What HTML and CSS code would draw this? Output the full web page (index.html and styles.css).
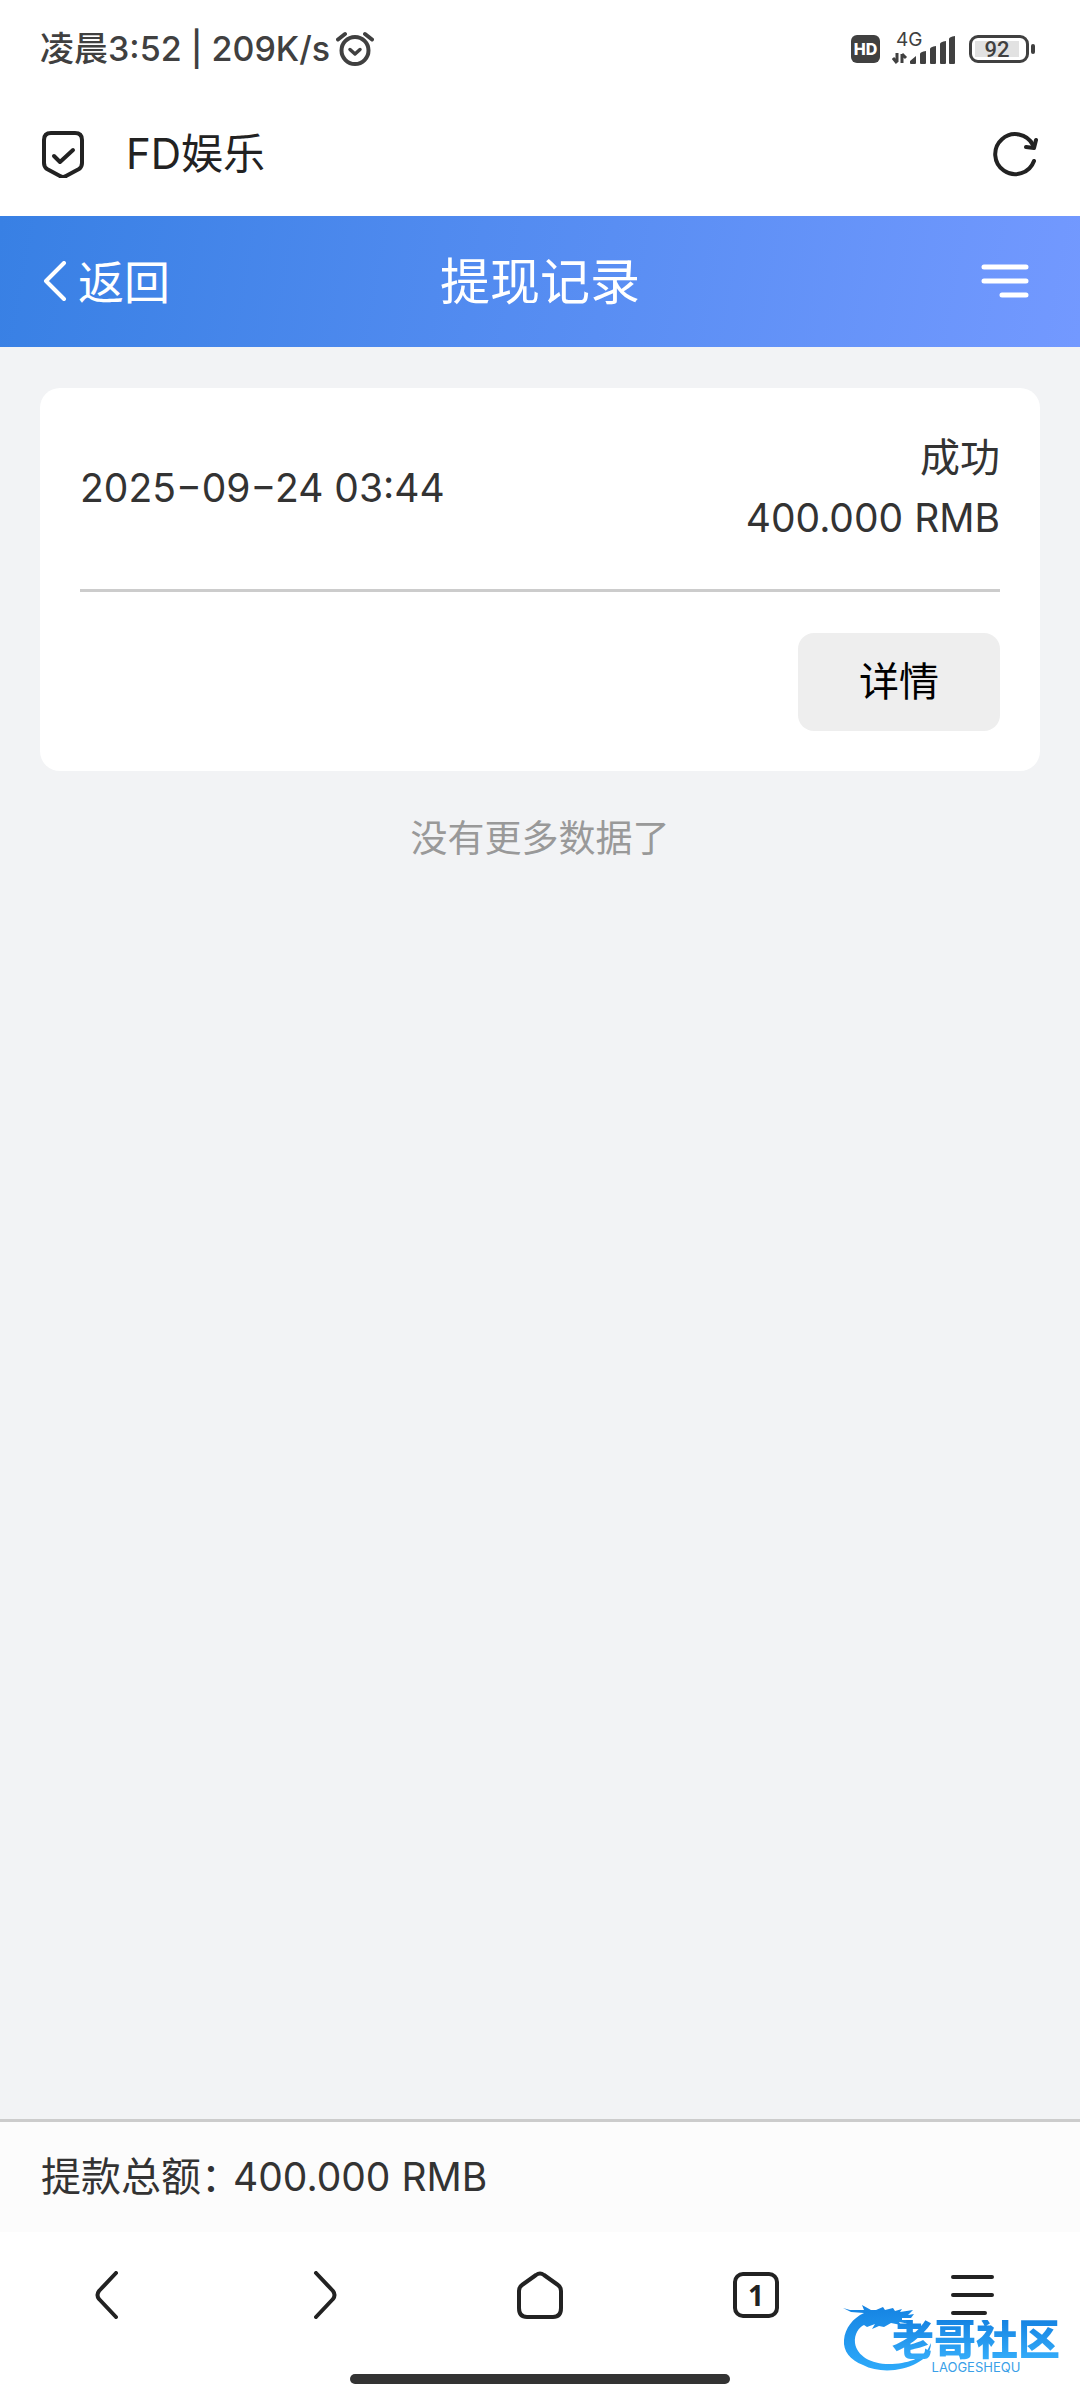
FILE: index.html
```html
<!DOCTYPE html>
<html lang="zh-CN">
<head>
<meta charset="utf-8">
<meta name="viewport" content="width=device-width, initial-scale=1">
<title>提现记录</title>
<link rel="stylesheet" href="styles.css">
</head>
<body>
<div class="status-bar">
  <div class="status-left">
    <span>凌晨3:52 | 209K/s</span>
    <svg class="icon" width="38" height="36" viewBox="0 0 38 36" fill="none" stroke="#404040" stroke-linecap="round" stroke-linejoin="round">
      <circle cx="19" cy="19.500" r="13.500" stroke-width="4"/>
      <path d="M14 18.500l5 4.500 5-4.500" stroke-width="3.500"/>
      <path d="M2 8.500l7-5.500M36 8.500l-7-5.500" stroke-width="4"/>
    </svg>
  </div>
  <div class="status-right">
    <span class="hd">HD</span>
    <div class="signal">
      <span class="network">4G</span>
      <svg class="icon" width="64" height="32" viewBox="0 0 64 32" fill="#404040">
        <path d="M5 20v9M1 25l4 5" fill="none" stroke="#404040" stroke-width="3"/>
        <path d="M10 30v-9M10 21l4 4" fill="none" stroke="#404040" stroke-width="3"/>
        <path d="M18 28l6-5v7q0 1-1 1h-4q-1 0-1-1zM28 21q0-2 6-3v12q0 1-1 1h-4q-1 0-1-1zM38 16q0-2 6-3v17q0 1-1 1h-4q-1 0-1-1zM48 11q0-2 6-3v22q0 1-1 1h-4q-1 0-1-1zM57 6q0-2 6-3v27q0 1-1 1h-4q-1 0-1-1z"/>
      </svg>
    </div>
    <div class="battery"><span class="battery-level">92</span></div>
  </div>
</div>

<div class="address-bar">
  <svg class="icon" width="44" height="48" viewBox="0 0 44 48" fill="none" stroke="#222" stroke-width="4" stroke-linecap="round" stroke-linejoin="round">
    <path d="M10 3h24q7 0 7 7v23q0 4-3 6l-13 7q-3 2-6 0L6 39q-3-2-3-6V10q0-7 7-7z"/>
    <path d="M13 26l6 6 13-12"/>
  </svg>
  <span class="site-name">FD娱乐</span>
  <button class="plain" aria-label="刷新">
    <svg class="icon" width="46" height="46" viewBox="0 0 46 46" fill="none" stroke="#222" stroke-width="4" stroke-linecap="round" stroke-linejoin="round">
      <path d="M42 30A20 20 0 1 1 41 14"/>
      <path d="M34 16l8 1 2-8"/>
    </svg>
  </button>
</div>

<header class="app-header">
  <a class="back" href="#">
    <svg class="icon" width="26" height="42" viewBox="0 0 26 42" fill="none" stroke="#fff" stroke-width="4" stroke-linecap="round" stroke-linejoin="round"><path d="M22 2L4 20l18 18"/></svg>
    返回
  </a>
  <h1 class="title">提现记录</h1>
  <button class="plain menu" aria-label="菜单">
    <svg class="icon" width="48" height="36" viewBox="0 0 48 36" fill="none" stroke="#fff" stroke-width="5" stroke-linecap="round"><path d="M3 3h42M3 17h42M21 31h24"/></svg>
  </button>
</header>

<main class="content">
  <article class="card">
    <div class="record">
      <time class="number" datetime="2025-09-24T03:44">2025−09−24 03:44</time>
      <div class="result">
        <div>成功</div>
        <div class="number">400.000 RMB</div>
      </div>
    </div>
    <div class="actions"><button class="detail">详情</button></div>
  </article>
  <p class="no-more">没有更多数据了</p>
</main>

<footer class="total"><span class="total-label">提款总额：</span><span class="number">400.000 RMB</span></footer>

<div class="browser-bar">
  <nav class="browser-nav">
    <button class="plain" aria-label="后退"><svg class="icon" width="48" height="48" viewBox="0 0 48 48"><path d="M32 2L15 20q-3 4 0 8l17 18"/></svg></button>
    <button class="plain" aria-label="前进"><svg class="icon" width="48" height="48" viewBox="0 0 48 48"><path d="M16 2l17 18q3 4 0 8L16 46"/></svg></button>
    <button class="plain" aria-label="主页"><svg class="icon" width="48" height="48" viewBox="0 0 48 48"><path d="M20 4q4-3 8 0l14 10q3 2 3 6v17q0 9-8 9H11q-8 0-8-9V20q0-4 3-6z"/></svg></button>
    <button class="plain" aria-label="标签页"><span class="tab-count">1</span></button>
    <button class="plain" aria-label="更多"><svg class="icon" width="48" height="48" viewBox="0 0 48 48"><path d="M5 6h39M5 24h39M5 42h32"/></svg></button>
  </nav>
  <div class="home-indicator"></div>
  <div class="watermark">
    <svg class="dragon" width="92" height="70" viewBox="0 0 92 70">
      <defs><linearGradient id="blue" x1="0" y1="0" x2="0" y2="1"><stop offset="0" stop-color="#1583e2"/><stop offset="1" stop-color="#2eaafa"/></linearGradient></defs>
      <path fill="url(#blue)" d="M1 4l7 2 14 0-2-5 9 5 5 0 7-3 2 3 8-2 2 3 7-2-2 3 13-2-5 5 6-1-3 4-9 0 0 2 10 0-2 4-11-2 2 3-10-2-7 4-5-1-7 3 3-5-8 3-3-2C17 23 12 30 13 39c2 13 16 21 34 21 18 0 34-6 39-15l3-6c0 9-6 16-14 20-16 9-39 10-54 2C8 56 1 47 2 36 3 24 11 14 22 9L9 8z"/>
    </svg>
    <div class="brand">
      <span class="brand-cn">老哥社区</span>
      <span class="brand-en">LAOGESHEQU</span>
    </div>
  </div>
</div>
</body>
</html>
```
FILE: styles.css
```css
* { box-sizing: border-box; }

body {
  margin: 0;
  min-height: 100vh;
  display: flex;
  flex-direction: column;
  background: #fff;
  color: #333;
  font-family: Inter, "Noto Sans CJK SC", sans-serif;
  font-size: 40px;
  line-height: 60px;
}

.icon { display: block; flex: none; }

.number { font-size: 39px; }

.plain {
  display: flex;
  align-items: center;
  justify-content: center;
  padding: 0;
  border: 0;
  background: none;
  color: inherit;
  font: inherit;
}

/* Phone status bar */
.status-bar {
  display: flex;
  align-items: center;
  justify-content: space-between;
  height: 98px;
  padding: 0 46px 0 40px;
  color: #404040;
}

.status-left {
  display: flex;
  align-items: center;
  gap: 6px;
  font-size: 34px;
  font-weight: 500;
}

.status-right { display: flex; align-items: center; }

.hd {
  width: 29px;
  height: 28px;
  border-radius: 6px;
  background: #404040;
  color: #fff;
  font-size: 16px;
  font-weight: 800;
  line-height: 28px;
  text-align: center;
}

.signal { position: relative; margin: 0 13px 0 12px; }

.network {
  position: absolute;
  top: -2px;
  left: 4px;
  font-size: 19px;
  line-height: 18px;
}

.battery {
  position: relative;
  width: 60px;
  height: 28px;
  margin-right: 5px;
  padding: 3px;
  border: 3px solid #404040;
  border-radius: 9px;
}

.battery::after {
  content: "";
  position: absolute;
  top: 6px;
  right: -9px;
  width: 4px;
  height: 10px;
  border-radius: 2px;
  background: #404040;
}

.battery-level {
  display: block;
  width: 44px;
  height: 16px;
  background: #e2e2e2;
  font-family: Roboto, sans-serif;
  font-size: 22px;
  font-weight: 500;
  line-height: 17px;
  text-align: center;
}

/* Browser address bar */
.address-bar {
  display: flex;
  align-items: center;
  height: 118px;
  padding: 0 42px 6px 41px;
  color: #222;
}

.site-name {
  flex: 1;
  padding-left: 41px;
  font-size: 42px;
}

/* Page header */
.app-header {
  display: grid;
  grid-template-columns: 1fr auto 1fr;
  align-items: center;
  height: 131px;
  padding: 0 42px;
  background: linear-gradient(100deg, #3880e4, #7399ff);
  color: #fff;
}

.back {
  display: flex;
  align-items: center;
  gap: 10px;
  color: #fff;
  font-size: 46px;
  text-decoration: none;
}

.title { margin: 0; font-size: 50px; font-weight: 400; }

.menu { justify-self: end; padding-right: 9px; }

/* Records */
.content {
  flex: 1;
  padding: 41px 40px;
  background: #f2f3f5;
}

.card {
  padding: 40px;
  border-radius: 20px;
  background: #fff;
}

.record {
  display: flex;
  align-items: center;
  justify-content: space-between;
  padding-bottom: 41px;
  border-bottom: 3px solid #ccc;
}

.result { text-align: right; }

.actions {
  display: flex;
  justify-content: flex-end;
  padding-top: 41px;
}

.detail {
  padding: 19px 61px;
  border: 0;
  border-radius: 16px;
  background: #eee;
  color: #000;
  font: inherit;
}

.no-more {
  margin: 38px 0 0;
  color: #999;
  font-size: 37px;
  text-align: center;
}

.total {
  display: flex;
  align-items: center;
  gap: 12px;
  height: 113px;
  padding: 0 41px;
  border-top: 3px solid #ccc;
  background: #fcfcfc;
}

.total-label { font-feature-settings: "halt"; }

/* Browser toolbar */
.browser-bar { position: relative; height: 168px; }

.browser-nav {
  display: grid;
  grid-template-columns: repeat(5, 1fr);
  height: 126px;
  color: #222;
}

.browser-nav path {
  fill: none;
  stroke: #222;
  stroke-width: 4px;
  stroke-linecap: round;
  stroke-linejoin: round;
}

.tab-count {
  width: 46px;
  height: 46px;
  border: 4px solid #222;
  border-radius: 10px;
  font-family: "Noto Sans", sans-serif;
  font-size: 28px;
  font-weight: 700;
  line-height: 38px;
}

.home-indicator {
  width: 380px;
  height: 10px;
  margin: 16px auto 0;
  border-radius: 5px;
  background: #333;
}

.watermark {
  position: absolute;
  right: 20px;
  bottom: 26px;
  display: flex;
}

.dragon { flex: none; }

.brand {
  display: flex;
  flex-direction: column;
  align-items: center;
  margin-left: -42px;
  padding-top: 16px;
}

.brand-cn {
  background: linear-gradient(#1583e2, #35adfa);
  background-clip: text;
  color: transparent;
  font-size: 42px;
  font-weight: 900;
  line-height: 40px;
}

.brand-en {
  color: #3a9fe8;
  font-size: 13px;
  line-height: 14px;
}
```
